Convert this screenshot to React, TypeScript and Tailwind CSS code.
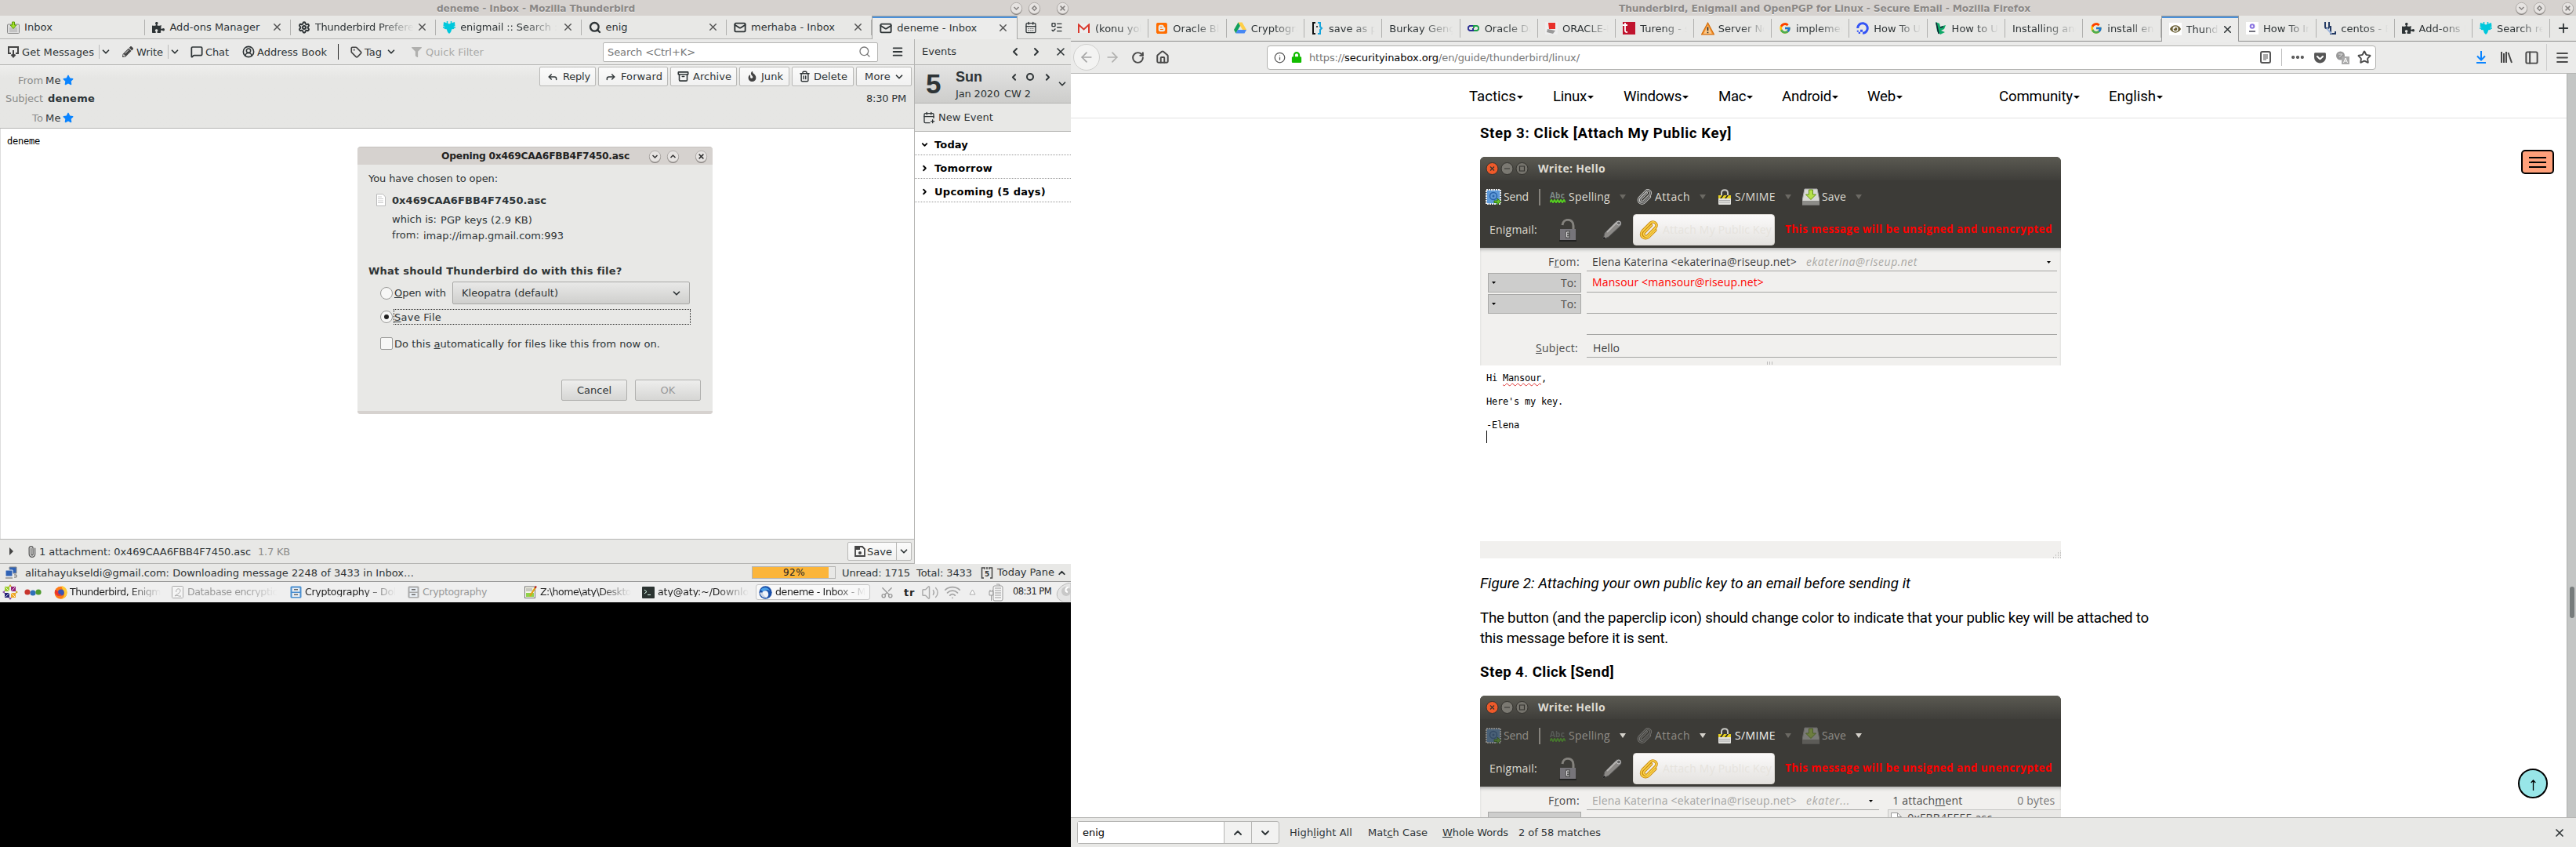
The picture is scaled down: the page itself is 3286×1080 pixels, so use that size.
import React, { useLayoutEffect, useRef } from "react";
import {
  Search, X, ChevronDown, ChevronUp, ChevronLeft, ChevronRight, Menu, CalendarDays, CalendarPlus, ListTodo, Mail,
  MessageSquare, Tag, Trash2, Archive, Reply, CircleUserRound, ArrowLeft, ArrowRight, RotateCw, House, Info, Ellipsis,
  Star, Plus, Paperclip, Settings, Wifi, Scissors, Volume2, PanelLeft,
} from "lucide-react";
import { FaPuzzlePiece, FaStar, FaPencilAlt, FaLock, FaGetPocket, FaDigitalOcean, FaBlogger, FaEye, FaFilter, FaFire } from "react-icons/fa";
import { FcGoogle } from "react-icons/fc";

/** Single line of text whose tracking is adjusted so it spans its box. */
function T({ c = "", children }: { c?: string; children: React.ReactNode }) {
  const box = useRef<HTMLSpanElement>(null);
  const inner = useRef<HTMLSpanElement>(null);
  useLayoutEffect(() => {
    const b = box.current, i = inner.current;
    if (!b || !i) return;
    i.style.letterSpacing = "0px";
    const n = (i.textContent || "").length;
    const d = b.clientWidth - i.getBoundingClientRect().width;
    i.style.letterSpacing = d / n + "px";
  }, []);
  return (
    <span ref={box} className={"block shrink-0 whitespace-pre leading-none " + c}>
      <span ref={inner} className="inline-block">{children}</span>
    </span>
  );
}

const FADE = " [mask-image:linear-gradient(to_right,#000_65%,transparent)]";

function WinBtn({ kind, dim, c = "" }: { kind: "down" | "up" | "max" | "x"; dim?: boolean; c?: string }) {
  return (
    <svg className={"size-[17px] shrink-0 " + c} viewBox="0 0 17 17">
      <circle cx="8.5" cy="9.5" r="7.4" fill="#85817e" />
      <circle cx="8.5" cy="8.5" r="7.2" fill="#e6e3e1" stroke="#a8a4a1" strokeWidth=".8" />
      <g fill="none" stroke={dim ? "#858280" : "#333"} strokeWidth="1.500">
        {kind === "down" && <path d="M5.5 7l3 3 3-3" />}
        {kind === "up" && <path d="M5.5 10l3-3 3 3" />}
        {kind === "max" && <path d="M8.5 5.8L11.2 8.5 8.5 11.2 5.8 8.5z" />}
        {kind === "x" && <path d="M5.6 5.6l5.8 5.8M11.4 5.6l-5.8 5.8" />}
      </g>
    </svg>
  );
}

const Chev = ({ c = "" }) => <ChevronDown className={"size-[14px] shrink-0 " + c} strokeWidth={3} />;

function InboxIcon({ c = "" }) {
  return (
    <svg className={"size-4 shrink-0 " + c} viewBox="0 0 16 16">
      <rect x=".5" y="4" width="15" height="11.5" rx="1" fill="#ddd" stroke="#888" />
      <path d="M3 9h10M3 11h10M3 13h10" stroke="#aaa" />
      <path d="M6.5 1h3v4H12L8 9.5 4 5h2.5z" fill="#a5e02b" stroke="#5a9a08" />
    </svg>
  );
}
const Pgp = ({ c = "" }) => (
  <svg className={"size-4 shrink-0 " + c} viewBox="0 0 16 16">
    <path d="M1 1l3 1 4 1.5L12 2l3-1 .5 5-2 1 .8 3-3 .3L10 14l-2 2-2-2-1.300-3.700-3-.3.8-3-2-1z" fill="#00c8dc" />
    <path d="M5.500 0v3M10.500 0v3M0 8h3M16 8h-3" stroke="#00c8dc" strokeWidth="1.500" />
  </svg>
);

function TbTab({ icon, label, w, fade, close = true, active }: { icon: React.ReactNode; label: string; w: string; fade?: boolean; close?: boolean; active?: boolean }) {
  return (
    <div className={"flex h-[30px] w-[185.4px] shrink-0 items-center " + (active ? "border-x border-t border-[#a5a5a3] bg-[#ececeb] shadow-[inset_0_2px_0_#4a90d9]" : "border-b border-[#b5b5b3]")}>
      <div className="ml-[9px] flex w-[16px] shrink-0">{icon}</div>
      <T c={"ml-[6px] pb-px " + w + (fade ? FADE : "")}>{label}</T>
      <div className="flex-1" />
      {close && <X className="mr-[9px] size-[15px] text-[#555]" strokeWidth={2.300} />}
      <div className={"h-[20px] w-px " + (active ? "" : "bg-[#b0b0ae]")} />
    </div>
  );
}

function ActionBtn({ c, w, icon, children }: { c: string; w: string; icon?: React.ReactNode; children: string }) {
  return (
    <div className={"flex h-[25px] shrink-0 items-center rounded-[2px] border border-[#b9b9b7] bg-linear-to-b from-[#fbfbfb] to-[#f1f1f0] " + c}>
      {icon}
      <T c={w}>{children}</T>
      {children === "More" && <Chev c="ml-[4px]" />}
    </div>
  );
}

function DialogBox() {
  return (
    <div className="absolute left-[456px] top-[187px] flex h-[341px] w-[453px] flex-col overflow-hidden rounded-[4px] bg-[#e8e8e6]">
      <div className="flex h-[23px] shrink-0 items-center rounded-t-[4px] border-t border-[#c5c2bf] bg-[#d6d2cf]">
        <T c="ml-[107px] w-[240px] text-[12.300px] font-bold text-[#222]">Opening 0x469CAA6FBB4F7450.asc</T>
        <WinBtn kind="down" c="ml-[24px]" />
        <WinBtn kind="up" c="ml-[6px]" />
        <WinBtn kind="x" c="ml-[19px]" />
      </div>
      <div className="flex h-[314px] flex-col pl-[14px]">
        <T c="mt-[11px] w-[165px]">You have chosen to open:</T>
        <div className="mt-[13px] flex h-[16px] items-center">
          <svg className="ml-[10px] h-4 w-3 shrink-0" viewBox="0 0 12 16"><path d="M.5.5h8L11.500 4v11.500H.5z" fill="#fff" stroke="#bbb" /><path d="M2 4h5M2 6.500h7M2 9h7M2 11.500h7" stroke="#ccc" /></svg>
          <T c="ml-[8px] w-[197px] font-bold">0x469CAA6FBB4F7450.asc</T>
        </div>
        <div className="mt-[8px] flex h-[16px] items-center pl-[30px]"><T c="w-[57px]">which is:</T><T c="ml-[5px] mt-[2px] w-[117px]">PGP keys (2.9 KB)</T></div>
        <div className="mt-[4px] flex h-[16px] items-center pl-[30px]"><T c="w-[35px]">from:</T><T c="ml-[5px] mt-[2px] w-[179px]">imap://imap.gmail.com:993</T></div>
        <T c="mt-[32px] w-[323px] font-bold">What should Thunderbird do with this file?</T>
        <div className="mt-[7px] flex h-[29px] items-center">
          <span className="ml-[15px] size-4 shrink-0 rounded-full border border-[#9a9a98] bg-[#f7f7f6]" />
          <T c="ml-[2px] w-[66px]"><u>O</u>pen with</T>
          <div className="ml-[8px] flex h-[29px] w-[303px] items-center rounded-[2px] border border-[#a7a7a5] bg-linear-to-b from-[#e9e9e8] to-[#cfcfcd]">
            <T c="ml-[11px] w-[123px]">Kleopatra (default)</T>
            <Chev c="ml-[144px]" />
          </div>
        </div>
        <div className="mt-[6px] flex h-[20px] items-center">
          <span className="ml-[15px] flex size-4 shrink-0 items-center justify-center rounded-full border border-[#9a9a98] bg-[#f7f7f6]"><span className="size-[6px] rounded-full bg-[#222]" /></span>
          <div className="ml-px flex h-[20px] w-[379px] items-center border border-dotted border-[#222]"><T c="w-[60px]"><u>S</u>ave File</T></div>
        </div>
        <div className="mt-[15px] flex h-[18px] items-center">
          <span className="ml-[15px] size-4 shrink-0 rounded-[2px] border border-[#9a9a98] bg-[#f7f7f6]" />
          <T c="ml-[2px] w-[339px]">Do this <u>a</u>utomatically for files like this from now on.</T>
        </div>
        <div className="mt-[37px] flex h-[27px] gap-[10px] pl-[246px]">
          <div className="flex w-[84px] items-center justify-center rounded-[2px] border border-[#b0b0ae] bg-linear-to-b from-[#eeeeed] to-[#d6d6d4]"><T c="w-[44px]">Cancel</T></div>
          <div className="flex w-[84px] items-center justify-center rounded-[2px] border border-[#b0b0ae] bg-linear-to-b from-[#eeeeed] to-[#d6d6d4] text-[#999]"><T c="w-[19px]">OK</T></div>
        </div>
      </div>
      <div className="h-[4px] bg-[#d6d2cf]" />
    </div>
  );
}

const CabinetIcon = ({ c }: { c: string }) => (
  <svg className="h-[16px] w-[15px] shrink-0" viewBox="0 0 15 16"><rect x=".5" y=".5" width="14" height="15" rx="1.500" className={c} /><rect x="2.500" y="2.500" width="10" height="5" fill="#e8eef4" /><rect x="2.500" y="9" width="10" height="5" fill="#e8eef4" /><path d="M5 4h5v1.500H5zM5 10.500h5V12H5z" fill="#666" /></svg>
);

function Thunderbird() {
  return (
    <div className="relative flex h-[768px] flex-col bg-[#e8e8e6] text-[13px] text-[#2e3436]">
      <div className="flex h-[20px] shrink-0 items-center bg-[#d6d2cf]">
        <T c="ml-[557px] w-[253px] pt-[2px] text-[12.300px] font-bold text-[#8b8886] [text-shadow:0_1px_0_#eee]">deneme - Inbox - Mozilla Thunderbird</T>
        <WinBtn kind="down" dim c="ml-[478px]" />
        <WinBtn kind="max" dim c="ml-[6px]" />
        <WinBtn kind="x" dim c="ml-[19px]" />
      </div>
      <div className="flex h-[30px] shrink-0">
        <TbTab icon={<InboxIcon />} label="Inbox" w="w-[36px]" close={false} />
        <TbTab icon={<FaPuzzlePiece className="size-4" />} label="Add-ons Manager" w="w-[115px]" />
        <TbTab icon={<Settings className="size-4" strokeWidth={3} />} label="Thunderbird Prefere" w="w-[126px]" fade />
        <TbTab icon={<Pgp />} label="enigmail :: Search :" w="w-[124px]" fade />
        <TbTab icon={<Search className="size-4" strokeWidth={3.500} />} label="enig" w="w-[28px]" />
        <TbTab icon={<Mail className="size-4" strokeWidth={2.800} />} label="merhaba - Inbox" w="w-[107px]" />
        <TbTab icon={<Mail className="size-4" strokeWidth={2.800} />} label="deneme - Inbox" w="w-[102px]" active />
        <div className="flex flex-1 items-center border-b border-[#b5b5b3]">
          <CalendarDays className="ml-[9px] size-4 shrink-0" /><ListTodo className="ml-[17px] size-4 shrink-0" />
        </div>
      </div>
      <div className="flex h-[669px] shrink-0">
        <div className="flex w-[1166px] flex-col">
          <div className="flex h-[33px] shrink-0 items-center border-b border-[#b5b5b3] bg-[#eaeae9]">
            <svg className="ml-[9px] size-[16px] shrink-0" viewBox="0 0 16 16" fill="none" stroke="#444" strokeWidth="2"><path d="M5 10H2V2h12v8h-3M8 6v8M5.500 11.500L8 14.500l2.500-3" /></svg>
            <T c="ml-[3px] w-[92px]">Get Messages</T>
            <span className="ml-[6px] h-[18px] w-px bg-[#bbb]" />
            <Chev c="ml-px" />
            <FaPencilAlt className="ml-[14px] size-[14px] shrink-0 text-[#444]" />
            <T c="ml-[4px] w-[34px]">Write</T>
            <span className="ml-[6px] h-[18px] w-px bg-[#bbb]" />
            <Chev c="ml-px" />
            <MessageSquare className="ml-[13px] size-4 shrink-0" strokeWidth={2.600} />
            <T c="ml-[3px] w-[30px]">Chat</T>
            <CircleUserRound className="ml-[17px] size-4 shrink-0" strokeWidth={2.400} />
            <T c="ml-[3px] w-[89px]">Address Book</T>
            <span className="ml-[14px] h-[20px] w-px bg-[#222]" />
            <Tag className="ml-[15px] size-[15px] shrink-0 text-[#444]" strokeWidth={2.600} />
            <T c="ml-[3px] w-[22px]">Tag</T>
            <Chev c="ml-[5px]" />
            <FaFilter className="ml-[19px] size-[13px] shrink-0 text-[#b0b0ae]" />
            <T c="ml-[5px] w-[74px] text-[#a9a9a7]">Quick Filter</T>
            <div className="ml-[152px] flex h-[25px] w-[351px] shrink-0 items-center rounded-[2px] border border-[#b5b5b3] bg-white text-[#777]">
              <T c="ml-[5px] w-[112px]">Search &lt;Ctrl+K&gt;</T>
              <Search className="ml-auto mr-[8px] size-4" />
            </div>
            <Menu className="ml-[17px] size-[16px] shrink-0" strokeWidth={2.800} />
          </div>
          <div className="flex h-[81px] shrink-0 justify-between border-b border-[#b5b5b3] bg-linear-to-b from-[#eeeeed] to-[#e6e6e4] to-20%">
            <div className="flex flex-col text-[#2e3436]">
              <div className="mt-[11px] flex h-[16px] items-center"><T c="ml-[23px] w-[32px] text-[#8c8c8a]">From</T><T c="ml-[3px] w-[20px]">Me</T><FaStar className="ml-[2px] size-[14px] text-[#0a84ff]" /></div>
              <div className="mt-[7px] flex h-[16px] items-center"><T c="ml-[7px] w-[48px] text-[#8c8c8a]">Subject</T><T c="ml-[6px] w-[60px] font-bold">deneme</T></div>
              <div className="mt-[9px] flex h-[16px] items-center"><T c="ml-[41px] w-[14px] text-[#8c8c8a]">To</T><T c="ml-[3px] w-[20px]">Me</T><FaStar className="ml-[2px] size-[14px] text-[#0a84ff]" /></div>
            </div>
            <div className="mr-[3px] mt-[2px] flex flex-col items-end">
              <div className="flex gap-[3px]">
                <ActionBtn c="w-[72px]" w="ml-[6px] w-[35px]" icon={<Reply className="ml-[9px] size-[14px] shrink-0" strokeWidth={2.600} />}>Reply</ActionBtn>
                <ActionBtn c="w-[89px]" w="ml-[6px] w-[53px]" icon={<Reply className="ml-[8px] size-[14px] shrink-0 -scale-x-100" strokeWidth={2.600} />}>Forward</ActionBtn>
                <ActionBtn c="w-[85px]" w="ml-[5px] w-[49px]" icon={<Archive className="ml-[8px] size-[15px] shrink-0" strokeWidth={2.500} />}>Archive</ActionBtn>
                <ActionBtn c="w-[64px]" w="ml-[5px] w-[28px]" icon={<FaFire className="ml-[9px] size-[13px] shrink-0 text-[#444]" />}>Junk</ActionBtn>
                <ActionBtn c="w-[79px]" w="ml-[4px] w-[43px]" icon={<Trash2 className="ml-[8px] size-[15px] shrink-0" strokeWidth={2.300} />}>Delete</ActionBtn>
                <ActionBtn c="w-[71px]" w="ml-[10px] w-[33px]">More</ActionBtn>
              </div>
              <T c="mr-[7px] mt-[9px] w-[51px]">8:30 PM</T>
            </div>
          </div>
          <div className="flex-1 border-l border-[#ddd] bg-white"><T c="ml-[8px] mt-[10px] w-[42px] font-['DejaVu_Sans_Mono',monospace] text-[12px] text-black">deneme</T></div>
          <div className="flex h-[32px] shrink-0 items-center border-y border-[#b5b5b3]">
            <svg className="ml-[12px] h-[10px] w-[5px]" viewBox="0 0 5 10"><path d="M0 0l5 5-5 5z" fill="#444" /></svg>
            <Paperclip className="ml-[16px] size-[15px] shrink-0 rotate-[-45deg] text-[#555]" />
            <T c="ml-[2px] w-[270px]">1 attachment: 0x469CAA6FBB4F7450.asc</T>
            <T c="ml-[9px] w-[41px] text-[#8c8c8a]">1.7 KB</T>
            <div className="ml-auto mr-[3px] flex h-[24px] w-[82px] items-center rounded-[2px] border border-[#b9b9b7] bg-linear-to-b from-[#fbfbfb] to-[#f1f1f0]">
              <svg className="ml-[8px] size-[14px] shrink-0" viewBox="0 0 14 14"><path d="M1 1h9l3 3v9H1z" fill="none" stroke="#444" strokeWidth="1.800" /><path d="M1 1h6v4H1z" fill="#444" /><circle cx="7" cy="9" r="2" fill="#444" /></svg>
              <T c="ml-[2px] w-[32px]">Save</T>
              <span className="ml-[5px] h-full w-px bg-[#b9b9b7]" />
              <Chev c="ml-[2px]" />
            </div>
          </div>
        </div>
        <div className="flex w-[200px] flex-col border-l border-[#b5b5b3] bg-white">
          <div className="flex h-[33px] shrink-0 items-center border-b border-[#b5b5b3] bg-[#e8e8e6]">
            <T c="ml-[9px] w-[44px] pb-[2px]">Events</T>
            <ChevronLeft className="ml-[67px] size-4 shrink-0" strokeWidth={3} /><ChevronRight className="ml-[11px] size-4 shrink-0" strokeWidth={3} /><X className="ml-[15px] size-4 shrink-0" strokeWidth={2.300} />
          </div>
          <div className="flex h-[49px] shrink-0 border-b border-[#b5b5b3] bg-linear-to-b from-[#e4e4e3] to-[#cdcdcb]">
            <T c="ml-[14px] mt-[6px] w-[19px] font-['Liberation_Sans',sans-serif] text-[35px] font-bold">5</T>
            <div className="ml-[19px] flex w-[127px] flex-col">
              <div className="mt-[6px] flex h-[18px] items-center">
                <T c="w-[34px] font-['Liberation_Sans',sans-serif] text-[18px] font-bold">Sun</T>
                <ChevronLeft className="ml-[34px] size-[13px] shrink-0" strokeWidth={3.500} />
                <span className="ml-[9px] size-[10px] rounded-full border-2 border-[#2e3436]" />
                <ChevronRight className="ml-[11px] size-[13px] shrink-0" strokeWidth={3.500} />
              </div>
              <div className="mt-[6px] flex"><T c="w-[56px]">Jan 2020</T><T c="ml-[6px] w-[34px]">CW 2</T></div>
            </div>
            <Chev c="ml-[2px] mt-[17px]" />
          </div>
          <div className="flex h-[36px] shrink-0 items-center border-b border-[#b5b5b3] bg-[#e8e8e6]"><CalendarPlus className="ml-[10px] size-4" /><T c="ml-[4px] w-[70px]">New Event</T></div>
          <div className="flex h-[30px] shrink-0 items-center border-b border-dotted border-[#999] pt-[3px] text-black"><ChevronDown className="ml-[7px] size-[11px]" strokeWidth={4} /><T c="ml-[7px] w-[43px] font-bold">Today</T></div>
          <div className="flex h-[30px] shrink-0 items-center border-b border-dotted border-[#999] pt-[3px] text-black"><ChevronRight className="ml-[7px] size-[11px]" strokeWidth={4} /><T c="ml-[7px] w-[74px] font-bold">Tomorrow</T></div>
          <div className="flex h-[30px] shrink-0 items-center border-b border-dotted border-[#999] pt-[3px] text-black"><ChevronRight className="ml-[7px] size-[11px]" strokeWidth={4} /><T c="ml-[7px] w-[142px] font-bold">Upcoming (5 days)</T></div>
        </div>
      </div>
      <div className="flex h-[23px] shrink-0 items-center border-b border-[#999]">
        <svg className="ml-[6px] size-[16px] shrink-0" viewBox="0 0 16 16"><path d="M6 1h9v8H6z" fill="#2f62b5" stroke="#888" /><path d="M1 5h9v8H1z" fill="#2f62b5" stroke="#eee" /><path d="M1 15h9M12 11h3v3h-3" stroke="#666" fill="none" /></svg>
        <T c="ml-[10px] w-[496px]">alitahayukseldi@gmail.com: Downloading message 2248 of 3433 in Inbox…</T>
        <div className="ml-[431px] flex h-[16px] w-[107px] items-center border border-[#b5b5b3] bg-linear-to-r from-[#fbb53a] from-92% to-[#e8e8e6] to-92%"><T c="ml-[39px] w-[28px] text-[12px] text-[#222]">92%</T></div>
        <T c="ml-[8px] w-[87px]">Unread: 1715</T>
        <T c="ml-[8px] w-[71px]">Total: 3433</T>
        <svg className="ml-[11px] size-[16px] shrink-0" viewBox="0 0 16 16"><path d="M4 2H1.500v13H4M12 2h2.500v13H12M5 1v3M8 1v3M11 1v3" fill="none" stroke="#444" strokeWidth="1.500" /><text x="5" y="13" fontSize="9" fontWeight="700" fill="#333">5</text></svg>
        <T c="ml-[5px] w-[73px] pb-px">Today Pane</T>
        <ChevronUp className="ml-[3px] size-[13px] shrink-0" strokeWidth={3.500} />
      </div>
      <div className="flex h-[26px] shrink-0 items-center bg-[#efefef] text-[12.600px] text-[#222]">
        <svg className="ml-[3px] size-[20px] shrink-0" viewBox="0 0 20 20"><path d="M3 3h6v6H3z" fill="#9ccd2a" /><path d="M11 3h6v6h-6z" fill="#932279" /><path d="M3 11h6v6H3z" fill="#262577" /><path d="M11 11h6v6h-6z" fill="#efa724" /><path d="M10 0l2 3h-4zM20 10l-3-2v4z" fill="#c9a02a" /><path d="M10 20l2-3H8zM0 10l3-2v4z" fill="#8a4fa0" /><path d="M4 4l12 12M16 4L4 16" stroke="#fff" strokeWidth=".8" /></svg>
        <svg className="ml-[8px] h-[10px] w-[22px] shrink-0" viewBox="0 0 22 10"><circle cx="4" cy="5" r="3.600" fill="#c8352e" /><circle cx="11" cy="6" r="3.600" fill="#2f6fb8" /><circle cx="18" cy="5" r="3.600" fill="#4f9a30" /></svg>
        <svg className="ml-[16px] size-[17px] shrink-0" viewBox="0 0 16 16"><circle cx="8" cy="8.300" r="7.500" fill="#ff7b16" /><path d="M9 0c4 1 7 4 6.500 8.500S11 16 8 15.800C12 14 13 11 12 8S9 3 9 0z" fill="#ffc933" /><circle cx="8.300" cy="8" r="3.700" fill="#3a53b5" /><path d="M1 5c2 0 4 1 4 3s2 3 4 2c-1 3-6 3-8-1z" fill="#e8352e" /></svg>
        <T c={"ml-[3px] w-[116px]" + FADE}>Thunderbird, Enigm</T>
        <svg className="ml-[14px] size-4 shrink-0" viewBox="0 0 16 16" fill="#f5f5f5" stroke="#aaa"><rect x=".5" y=".5" width="14" height="15" rx="1" /><path d="M6 8c-2-4 5-6 5-2s-6 5-7 7c3-2 5 1 8 0" fill="none" /></svg>
        <T c={"ml-[4px] w-[115px] text-[#999]" + FADE}>Database encryptic</T>
        <div className="ml-[16px] flex"><CabinetIcon c="fill-[#4b8fd0]" /></div>
        <T c={"ml-[4px] w-[116px]" + FADE}>Cryptography – Dol</T>
        <div className="ml-[15px] flex"><CabinetIcon c="fill-[#aaa]" /></div>
        <T c="ml-[4px] w-[82px] text-[#999]">Cryptography</T>
        <svg className="ml-[48px] size-[16px] shrink-0" viewBox="0 0 16 16"><rect x=".5" y="1" width="13" height="14.500" fill="#f6f6e8" stroke="#777" /><path d="M2 9h10v5H2z" fill="#8fd14a" /><path d="M2 4h8M2 6h8" stroke="#999" /><path d="M7 13l7-11" stroke="#e2a112" strokeWidth="2.200" /><path d="M13.500 3L15 .5" stroke="#b22" strokeWidth="2.200" /></svg>
        <T c={"ml-[4px] w-[116px]" + FADE}>Z:\home\aty\Deskto</T>
        <svg className="ml-[14px] h-[15px] w-[16px] shrink-0" viewBox="0 0 16 15"><rect width="16" height="15" rx="1" fill="#2b3331" /><path d="M3 4l3 2.500L3 9M7 10.500h4" stroke="#dfe" fill="none" /></svg>
        <T c={"ml-[4px] w-[116px]" + FADE}>aty@aty:~/Downlo</T>
        <div className="ml-[9px] flex h-[20px] w-[146px] shrink-0 items-center rounded-[3px] border border-[#c5c5c5] bg-[#f8f8f8]">
          <svg className="ml-[3px] size-[17px] shrink-0" viewBox="0 0 16 16"><circle cx="8" cy="8" r="7.700" fill="#1a4fa8" /><path d="M4.500 7c1-1.500 5-1.500 6 0s2 5-1 7c-4 .5-6-3-5-7z" fill="#f0f3f8" /><path d="M2 5c3-4 9-4 11.500 1.500C10 4 7 5 5.500 7 4 6 3 5.500 2 5z" fill="#4aa1ea" /><path d="M1 8c1 5 5 7 9 6-3-1-5-3-5.500-6z" fill="#c9d3e4" /></svg>
          <T c={"ml-[4px] w-[115px]" + FADE}>deneme - Inbox - M</T>
        </div>
        <Scissors className="ml-[13px] size-[17px] shrink-0 -rotate-90 text-[#999]" />
        <T c="ml-[13px] w-[14px] text-[13px] font-bold">tr</T>
        <Volume2 className="ml-[8px] size-[23px] shrink-0 text-[#aaa]" strokeWidth={1.500} />
        <Wifi className="ml-[6px] size-[22px] shrink-0 text-[#a5a5a5]" />
        <svg className="ml-[10px] h-[8px] w-[9px] shrink-0" viewBox="0 0 9 8"><path d="M4.500 1L8 7H1z" fill="#fff" stroke="#aaa" /></svg>
        <svg className="ml-[15px] h-[23px] w-[20px] shrink-0" viewBox="0 0 20 23" fill="none" stroke="#999"><rect x="7" y="3" width="12" height="19" rx="2" fill="#f5f5f5" /><path d="M11 1h4v2M9 6h8M9 9h8M9 12h8M9 15h8M9 18h8M2 10v5h5v-5zM3 8v2M6 8v2M4.500 15v7" /></svg>
        <T c="ml-[12px] w-[49px] pb-px text-[11.500px]">08:31 PM</T>
        <svg className="ml-[5px] h-[24px] w-[20px] shrink-0" viewBox="0 0 20 24"><path d="M20 0C2 2-4 20 10 24h10z" fill="#e4e4e4" stroke="#bbb" /><circle cx="14" cy="11" r="6" fill="#c8c8c8" /><path d="M17 6c-4 0-5 5-1 6" stroke="#fff" strokeWidth="2" fill="none" /></svg>
      </div>
      <DialogBox />
    </div>
  );
}

function FxTab({ icon, label, active }: { icon?: React.ReactNode; label: string; active?: boolean }) {
  return (
    <div className={"flex h-[33px] w-[99.330px] shrink-0 items-center " + (active ? "border-x border-t border-[#999] bg-[#ececeb] shadow-[inset_0_2px_0_#4a90d9]" : "border-b border-[#8f8f8d]")}>
      {icon && <div className="ml-[9px] flex w-[17px] shrink-0">{icon}</div>}
      <div className={(icon ? "ml-[5px] " : "ml-[9px] ") + (active ? "w-[41px]" : "flex-1") + " overflow-hidden whitespace-nowrap pt-px leading-[16px] [mask-image:linear-gradient(to_right,#000_50%,transparent)]"}>{label}</div>
      {active ? <X className="ml-[4px] size-[15px]" strokeWidth={2.500} /> : <><div className="w-[8px]" /><div className="h-[24px] w-px bg-[#b0b0ae]" /></>}
    </div>
  );
}

const Caret = ({ c = "", s = "h-[4px] w-[8px]" }) => <svg className={"shrink-0 " + s + " " + c} viewBox="0 0 8 4" preserveAspectRatio="none"><path d="M0 0h8L4 4z" fill="currentColor" /></svg>;
const BAR = "h-[6px] w-[8px]";
const TINY = "h-[3px] w-[5px]";

function Clip({ c = "", color, edge }: { c?: string; color: string; edge: string }) {
  return (
    <svg className={"shrink-0 " + c} viewBox="0 0 24 24" fill="none" strokeLinecap="round">
      <path d="M15 6L6 15c-2 3 2 6 4 4L20 9c4-5-3-9-6-6L4 13c-5 6 3 12 8 7l8-8" stroke={edge} strokeWidth="3.400" />
      <path d="M15 6L6 15c-2 3 2 6 4 4L20 9c4-5-3-9-6-6L4 13c-5 6 3 12 8 7l8-8" stroke={color} strokeWidth="1.600" />
    </svg>
  );
}

function Compose({ sending }: { sending?: boolean }) {
  const dim = sending ? "opacity-40" : "";
  const txt = sending ? "text-[#8f8c86]" : "text-[#dfdbd2]";
  const car = sending ? "text-[#d5d2cb]" : "text-[#6b6963]";
  return (
    <div className="flex h-[512px] w-[741px] shrink-0 flex-col bg-white font-['Open_Sans','Noto_Sans',sans-serif] text-[14px]">
      <div className="flex h-[116px] shrink-0 flex-col rounded-t-[6px] bg-[#3c3b37] text-[#dfdbd2]">
        <div className="flex h-[30px] items-center rounded-t-[6px] bg-linear-to-b from-[#5b5a52] to-[#3f3e3a]">
          <svg className="ml-[7px] h-[18px] w-[56px] shrink-0" viewBox="0 0 56 18"><g stroke="#33322e"><circle cx="8.500" cy="9" r="7.500" fill="#ee5a2a" /><circle cx="27.500" cy="9" r="7.500" fill="#7b7972" /><circle cx="46.500" cy="9" r="7.500" fill="#75736c" /></g><path d="M6 6.500l5 5M11 6.500l-5 5M24 9h7M43.500 6h6v6h-6z" stroke="#33322e" fill="none" strokeWidth="1.200" /></svg>
          <T c="ml-[11px] w-[86px] font-bold">Write: Hello</T>
        </div>
        <div className="flex h-[42px] items-center">
          <svg className={"ml-[7px] size-[20px] shrink-0 " + dim} viewBox="0 0 20 20"><rect x="1" y="1" width="18" height="18" fill="#5f9ad8" stroke="#eee" strokeWidth="2" strokeDasharray="2 1" /><circle cx="10" cy="9" r="4.500" fill="none" stroke="#2a62a8" strokeWidth="1.500" /><circle cx="10" cy="9" r="1.500" fill="#2a62a8" /><path d="M11 15h4v-3l4.500 4-4.500 4v-2.500h-4z" fill="#67c32a" stroke="#2c7a0a" /></svg>
          <T c={"ml-[3px] w-[32px] " + txt}>Send</T>
          <span className="ml-[13px] h-[21px] w-[2px] bg-[#85827c]" />
          <div className={"ml-[11px] flex w-[21px] shrink-0 flex-col items-center " + dim}>
            <T c="w-[19px] text-[10px] font-bold text-[#7f8a86]">Abc</T>
            <svg className="h-[5px] w-[20px]" viewBox="0 0 20 5"><path d="M0 4l2-3 2 3 2-3 2 3 2-3 2 3 2-3 2 3 2-3 2 3" fill="none" stroke="#55d020" strokeWidth="2" /></svg>
          </div>
          <T c={"ml-[4px] w-[53px] " + txt}>Spelling</T>
          <Caret s={BAR} c={"ml-[12px] " + car} />
          <Clip c={"ml-[14px] size-[20px] " + dim} color="#555" edge="#d8d8d4" />
          <T c={"ml-[3px] w-[45px] " + txt}>Attach</T>
          <Caret s={BAR} c={"ml-[12px] " + car} />
          <svg className="ml-[16px] h-[20px] w-[16px] shrink-0" viewBox="0 0 16 20"><path d="M4 9V5c0-5 8-5 8 0v4" fill="none" stroke="#c9c9c4" strokeWidth="2" /><rect y="8" width="16" height="12" rx="1" fill="#e2e2de" /><path d="M0 8h16v4H0z" fill="#e5cf20" /><path d="M2 12l3-4h2l-3 4zM8 12l3-4h2l-3 4z" fill="#222" /><path d="M1 14.500h14M1 17h14" stroke="#aaa" /></svg>
          <T c={"ml-[5px] w-[52px] " + (sending ? "text-[#f5f3ee]" : txt)}>S/MIME</T>
          <Caret s={BAR} c="ml-[12px] text-[#6b6963]" />
          <svg className={"ml-[14px] size-[22px] shrink-0 " + dim} viewBox="0 0 22 22"><path d="M3 1h16l3 15v5H0v-5z" fill="#d8d8d4" stroke="#aaa" /><path d="M0 16h22v5H0z" fill="#8c8c88" /><path d="M8.500 2h5v6h4L11 14.500 4.500 8h4z" fill="#b5e04a" stroke="#64921a" /></svg>
          <T c={"ml-[3px] w-[31px] " + txt}>Save</T>
          <Caret s={BAR} c={"ml-[12px] " + car} />
        </div>
        <div className="flex h-[42px] items-center">
          <T c="ml-[12px] w-[61px]">Enigmail:</T>
          <svg className="ml-[28px] h-[29px] w-[22px] shrink-0" viewBox="0 0 22 29"><path d="M4 8c1-9 14-9 14 1v5" fill="none" stroke="#85837e" strokeWidth="3" /><rect x="1" y="13" width="20" height="14" fill="#77757a" /><path d="M8 15h6v10H8z" fill="#555" /><path d="M12.500 17h-3v6h3M9.500 20h2.500" fill="none" stroke="#ddd" /><path d="M0 28h22" stroke="#222" strokeWidth="2" /></svg>
          <svg className="ml-[33px] h-[26px] w-[26px] shrink-0" viewBox="0 0 26 26"><path d="M1 25l2-8L18 2c2-2 8 2 5 6L8 22z" fill="#8b8986" stroke="#555" /><path d="M6 16L18 4" stroke="#b5b3b0" strokeWidth="2" /><path d="M1 25l1-3 2 2z" fill="#111" /><circle cx="21" cy="4.500" r="2.500" fill="#666" stroke="#ccc" /></svg>
          <div className="ml-[13px] flex h-[40px] w-[181px] shrink-0 items-center rounded-[4px] border border-[#dbd8d3] bg-linear-to-b from-[#fbfafa] to-[#e4e2df]">
            <Clip c="ml-[6px] h-[25px] w-[27px]" color="#fbd34a" edge="#c98a12" />
            <T c="ml-[4px] w-[139px] text-[#e6e3dd]">Attach My Public Key</T>
          </div>
          <T c="ml-[13px] w-[341px] text-[13.500px] font-bold text-[#f00]">This message will be unsigned and unencrypted</T>
        </div>
      </div>
      <div className="flex h-[150px] shrink-0 flex-col bg-[#f1f0ee] text-[#4c4c4c] shadow-[inset_0_4px_4px_-2px_#aaa]">
        <div className="flex h-[30px]">
          <T c="ml-[87px] mt-[11px] w-[40px]">F<u>r</u>om:</T>
          <div className={"ml-[9px] flex items-center border-b border-[#a5a5a3] pt-[7px] " + (sending ? "w-[374px]" : "w-[600px]")}>
            <T c={"ml-[7px] w-[261px] " + (sending ? "text-[#a5a5a3]" : "text-[#3c3c3c]")}>Elena Katerina &lt;ekaterina@riseup.net&gt;</T>
            {sending ? <T c="ml-[12px] w-[56px] italic text-[#aaa9a5]">ekater...</T> : <T c="ml-[12px] w-[142px] italic text-[#aaa9a5]">ekaterina@riseup.net</T>}
            <Caret s={TINY} c="ml-auto mr-[8px] text-black" />
          </div>
          {sending && <div className="ml-[11px] flex w-[221px] items-center border-b border-[#c5c5c3] pl-[6px] pt-[7px]"><T c="w-[89px]">1 attach<u>m</u>ent</T><T c="ml-[70px] w-[48px] text-[#777]">0 bytes</T></div>}
        </div>
        {[1, 2].map((n) => (
          <div key={n} className="flex h-[27px]">
            <div className="ml-[10px] mt-[2px] flex h-[25px] w-[119px] items-center border border-[#a9a9a7] bg-[#cdcdcc]">
              <Caret s={TINY} c="ml-[4px] text-black" />
              <T c="ml-[83px] w-[20px]">To:</T>
            </div>
            <div className={"ml-[7px] flex items-center border-b border-[#a5a5a3] " + (sending ? "w-[374px]" : "w-[600px]")}>
              {n === 1 && !sending && <T c="ml-[7px] mt-[2px] w-[219px] text-[#f00]">Mansour &lt;mansour@riseup.net&gt;</T>}
            </div>
            {sending && n === 1 && <div className="ml-[11px] flex w-[221px] border-l border-[#c5c5c3] bg-[#e9e8e6] pt-[3px]"><svg className="ml-[3px] h-[16px] w-[14px]" viewBox="0 0 14 16"><path d="M.5.5h8l5 5v10H.5z" fill="#fff" stroke="#999" /><path d="M8.500.5v5h5" fill="none" stroke="#999" /></svg><T c="ml-[7px] w-[108px]">0xFBB4EEEE.asc</T></div>}
          </div>
        ))}
        <div className="ml-[136px] h-[27px] w-[600px] border-b border-[#a5a5a3]" />
        <div className="flex h-[29px]">
          <T c="ml-[71px] mt-[10px] w-[54px]"><u>S</u>ubject:</T>
          <div className="ml-[11px] w-[600px] border-b border-[#a5a5a3]"><T c="ml-[8px] mt-[10px] w-[34px] text-[#3c3c3c]">Hello</T></div>
        </div>
        <div className="ml-[366px] mt-[5px] flex h-[4px] gap-[2px]"><span className="w-px bg-[#bbb]" /><span className="w-px bg-[#bbb]" /><span className="w-px bg-[#bbb]" /></div>
      </div>
      <div className="flex h-[224px] shrink-0 flex-col pl-[8px] font-['DejaVu_Sans_Mono',monospace] text-[12px] text-black">
        <T c="mt-[10px] w-[77px]">Hi <span className="underline decoration-[#d33] decoration-wavy decoration-1 underline-offset-2">Mansour</span>,</T>
        <T c="mt-[18px] w-[98px]">Here's my key.</T>
        <T c="mt-[18px] w-[42px]">-Elena</T>
        <span className="mt-px h-[16px] w-px bg-black" />
      </div>
      <div className="flex h-[22px] shrink-0 items-end justify-end bg-[#f1f0ee]"><svg className="size-[10px]" viewBox="0 0 10 10"><path d="M0 9h10M3 6h7M6 3h4M9 0h1" stroke="#999" strokeDasharray="1 2" /></svg></div>
    </div>
  );
}

function NavItem({ c, w, children }: { c: string; w: string; children: string }) {
  return <div className={"flex items-center " + c}><T c={w}>{children}</T><Caret c="ml-px mt-[2px]" /></div>;
}

function Firefox() {
  const g = <FcGoogle className="size-[16px]" />;
  return (
    <div className="flex h-[1080px] w-[1920px] flex-col bg-[#e8e8e6] text-[13px] text-[#2e3436]">
      <div className="flex h-[20px] shrink-0 items-center bg-[#d6d2cf]">
        <T c="ml-[699px] w-[525px] pt-[2px] text-[12.300px] font-bold text-[#8b8886] [text-shadow:0_1px_0_#eee]">Thunderbird, Enigmail and OpenPGP for Linux - Secure Email - Mozilla Firefox</T>
        <WinBtn kind="down" dim c="ml-[618px]" />
        <WinBtn kind="max" dim c="ml-[6px]" />
        <WinBtn kind="x" dim c="ml-[19px]" />
      </div>
      <div className="flex h-[33px] shrink-0">
        <FxTab label="(konu yok)" icon={<svg className="h-[12px] w-[15px]" viewBox="0 0 15 12"><path d="M0 0h15v12H0z" fill="#eee" /><path d="M1 12V1.500l6.500 6L14 1.500V12" fill="none" stroke="#d93a2e" strokeWidth="2" /></svg>} />
        <FxTab label="Oracle Blog" icon={<FaBlogger className="size-[16px] text-[#ff6d00]" />} />
        <FxTab label="Cryptography" icon={<svg className="size-[16px]" viewBox="0 0 16 15"><path d="M5.500 0h5l5.500 9.500h-5z" fill="#ffcf48" /><path d="M5.500 0L0 9.500 2.500 14 8 4.500z" fill="#12a05c" /><path d="M2.500 14L5 9.500h11L13.500 14z" fill="#4788f4" /></svg>} />
        <FxTab label="save as pdf" icon={<svg className="size-[16px]" viewBox="0 0 16 16" fill="none" strokeWidth="2"><path d="M5 1H2v14h3" stroke="#111" /><path d="M8 1h3v5l2 2-2 2v5H8" stroke="#16a4dc" /><circle cx="7" cy="6" r="1" fill="#111" stroke="none" /></svg>} />
        <FxTab label="Burkay Genç" />
        <FxTab label="Oracle Data" icon={<svg className="h-[10px] w-[15px]" viewBox="0 0 15 10" fill="none" strokeWidth="2"><path d="M7 2H3C0 3 0 7 3 8h4V5" stroke="#2b2f93" /><path d="M8 8h4c3-1 3-5 0-6H8v3" stroke="#1ea04a" /></svg>} />
        <FxTab label="ORACLE-BASE" icon={<svg className="size-[16px]" viewBox="0 0 16 16"><path d="M0 0h16v16H0z" fill="#eee" /><path d="M4 1h9v8H5z" fill="#e8302a" /><path d="M3 9l10 2-3 4-8-2z" fill="#999" /></svg>} />
        <FxTab label="Tureng - se" icon={<svg className="size-[16px]" viewBox="0 0 16 16"><path d="M0 0h16v16H0z" fill="#c0142e" /><path d="M0 4h6M3 1v10c0 2 1 2 3 2" stroke="#fff" strokeWidth="1.800" fill="none" /></svg>} />
        <FxTab label="Server Not" icon={<svg className="size-[17px]" viewBox="0 0 16 16"><path d="M8 1l7.500 14H.5z" fill="#f7912d" stroke="#cf6d0c" /><path d="M8 4l5 10H3z" fill="#fbc98a" /><path d="M8 6v4.500M8 12v1.500" stroke="#222" strokeWidth="1.500" /></svg>} />
        <FxTab label="implementi" icon={g} />
        <FxTab label="How To Use" icon={<FaDigitalOcean className="size-[16px] text-[#3454f5]" />} />
        <FxTab label="How to Use" icon={<svg className="size-[16px]" viewBox="0 0 16 16"><path d="M1 0l5 2 1 4 7-2-2 5-4 2 5 2-6 3-4-4z" fill="#0fa968" /><path d="M2 1l3 14M7 7l4-1" stroke="#123" strokeWidth="1.500" /></svg>} />
        <FxTab label="Installing and" />
        <FxTab label="install eni" icon={g} />
        <FxTab label="Thunder" active icon={<div className="flex size-[16px] items-center justify-center bg-white"><FaEye className="size-[14px] text-[#6a5f35]" /></div>} />
        <FxTab label="How To Ins" icon={<svg className="size-[16px]" viewBox="0 0 16 16"><path d="M0 0h16v16H0z" fill="#fff" /><circle cx="8" cy="5.500" r="3.300" fill="#8a74e0" /><circle cx="8" cy="5.500" r="1.200" fill="#fff" /><path d="M4 12h8" stroke="#445" strokeWidth="1.500" /></svg>} />
        <FxTab label="centos - Bi" icon={<svg className="size-[16px]" viewBox="0 0 16 16" fill="none" stroke="#243a63" strokeWidth="2"><path d="M2 0v6c0 3 5 3 5 0V0M9 5v10h6v-3" /><path d="M4 8l6 7" stroke="#9fb7dd" /></svg>} />
        <FxTab label="Add-ons Ma" icon={<FaPuzzlePiece className="size-[16px]" />} />
        <FxTab label="Search resu" icon={<Pgp />} />
        <div className="flex flex-1 items-center justify-center border-b border-[#8f8f8d]"><Plus className="size-[18px]" strokeWidth={2.400} /></div>
      </div>
      <div className="flex h-[41px] shrink-0 items-center border-b border-[#b5b5b3] bg-[#ebebea] text-[#4a4a4a]">
        <div className="ml-[3px] flex size-[34px] shrink-0 items-center justify-center rounded-full border border-[#cfcfcd] bg-[#f3f3f2] text-[#a5a5a5]"><ArrowLeft className="size-[20px]" /></div>
        <ArrowRight className="ml-[6px] size-[20px] text-[#b0b0ae]" />
        <RotateCw className="ml-[14px] size-[17px]" strokeWidth={2.800} />
        <House className="ml-[14px] size-[18px]" strokeWidth={2.600} />
        <div className="ml-[124px] flex h-[31px] w-[1415px] shrink-0 items-center rounded-[4px] border border-[#b0b0ae] bg-white">
          <Info className="ml-[8px] size-[15px] text-[#555]" />
          <FaLock className="ml-[7px] size-[14px] text-[#12bc00]" />
          <T c="ml-[9px] w-[45px] text-[#777]">https://</T>
          <T c="w-[120px] text-black">securityinabox.org</T>
          <T c="w-[180px] text-[#777]">/en/guide/thunderbird/linux/</T>
          <svg className="ml-auto h-[16px] w-[14px] text-[#555]" viewBox="0 0 14 16" fill="none" stroke="currentColor"><rect x="1" y="1" width="12" height="14" rx="2" strokeWidth="2" /><path d="M4 5h6M4 7h6M4 9h6M4 11h4" /></svg>
          <span className="ml-[13px] h-[22px] w-px bg-[#bbb]" />
          <Ellipsis className="ml-[10px] size-[20px]" strokeWidth={3} />
          <FaGetPocket className="ml-[10px] size-[17px] text-[#555]" />
          <svg className="ml-[12px] size-[17px]" viewBox="0 0 17 17"><circle cx="5.500" cy="6" r="5.500" fill="#999" /><path d="M7 7h10v10H7z" fill="#aaa" /><path d="M9.500 15l2.500-6 2.500 6M10.500 13h3" stroke="#fff" fill="none" /><path d="M3 4h5L4 8" stroke="#ddd" fill="none" /></svg>
          <Star className="ml-[10px] mr-[5px] size-[18px]" strokeWidth={2.500} />
        </div>
        <svg className="ml-[126px] size-[16px] shrink-0" viewBox="0 0 16 16" fill="none" stroke="#0a84ff" strokeWidth="2"><path d="M8 0v11M3 6.500l5 5 5-5M2 15h12" /></svg>
        <svg className="ml-[16px] size-[16px] shrink-0" viewBox="0 0 16 16" fill="none" stroke="#4a4a4a" strokeWidth="2"><path d="M2 1v14M5 3v12M8 1v14M10.500 2l4.500 13" /></svg>
        <PanelLeft className="ml-[15px] size-[19px]" strokeWidth={2.500} />
        <span className="ml-[9px] h-[34px] w-px bg-[#ccc]" />
        <Menu className="ml-[10px] size-[19px]" strokeWidth={2.600} />
      </div>
      <div className="flex h-[948px] shrink-0">
        <div className="relative flex h-[948px] w-[1908px] flex-col overflow-hidden bg-white font-['Roboto',sans-serif] text-[18.660px] text-black">
          <div className="flex h-[57px] shrink-0 items-center border-b border-[#e2e2e2] pt-[2px]">
            <NavItem c="ml-[508px]" w="w-[60px]">Tactics</NavItem>
            <NavItem c="ml-[38px]" w="w-[43px]">Linux</NavItem>
            <NavItem c="ml-[38px]" w="w-[74px]">Windows</NavItem>
            <NavItem c="ml-[38px]" w="w-[35px]">Mac</NavItem>
            <NavItem c="ml-[37px]" w="w-[63px]">Android</NavItem>
            <NavItem c="ml-[37px]" w="w-[36px]">Web</NavItem>
            <NavItem c="ml-[123px]" w="w-[94px]">Community</NavItem>
            <NavItem c="ml-[37px]" w="w-[60px]">English</NavItem>
          </div>
          <div className="ml-[522px] flex flex-col">
            <T c="mt-[10px] h-[18px] w-[321px] font-bold">Step 3: Click [Attach My Public Key]</T>
            <div className="mt-[21px] flex"><Compose /></div>
            <T c="mt-[23px] h-[20px] w-[549px] italic">Figure 2: Attaching your own public key to an email before sending it</T>
            <T c="mt-[24px] h-[18px] w-[853px]">The button (and the paperclip icon) should change color to indicate that your public key will be attached to</T>
            <T c="mt-[8px] h-[18px] w-[240px]">this message before it is sent.</T>
            <T c="mt-[25px] h-[18px] w-[171px] font-bold">Step 4<span className="font-normal">.</span> Click [Send]</T>
            <div className="mt-[21px] flex"><Compose sending /></div>
          </div>
          <div className="absolute right-[16px] top-[97px] flex h-[31px] w-[42px] flex-col items-center justify-center gap-[4px] rounded-[5px] border-2 border-black bg-[#ffa07a]">
            <span className="h-[2px] w-[22px] bg-black" /><span className="h-[2px] w-[22px] bg-black" /><span className="h-[2px] w-[22px] bg-black" />
          </div>
          <div className="absolute right-[24px] top-[886px] flex size-[38px] items-center justify-center rounded-full border-2 border-black bg-[#98e6e8]">
            <svg className="mt-[3px] h-[14px] w-[7px]" viewBox="0 0 7 14" fill="none" stroke="#000" strokeWidth="1.300"><path d="M3.500 14V1M.7 4l2.800-3 2.800 3" /></svg>
          </div>
        </div>
        <div className="flex w-[12px] justify-center border-l border-[#aeb0af] bg-[#c4c6c5]"><span className="mt-[654px] h-[40px] w-[6px] rounded-full bg-[#777c7c]" /></div>
      </div>
      <div className="flex h-[38px] shrink-0 items-center border-t border-[#b5b5b3]">
        <div className="ml-[8px] flex h-[29px] w-[258px] shrink-0 items-center rounded-[3px] border border-[#b5b5b3] bg-[#f2f2f1]">
          <div className="flex h-full w-[187px] items-center border-r border-[#b5b5b3] bg-white"><T c="ml-[6px] w-[28px] text-black">enig</T></div>
          <div className="flex h-full w-[35px] items-center justify-center border-r border-[#b5b5b3]"><ChevronUp className="size-[16px]" strokeWidth={2.800} /></div>
          <div className="flex flex-1 items-center justify-center"><ChevronDown className="size-[16px]" strokeWidth={2.800} /></div>
        </div>
        <T c="ml-[13px] w-[80px]">High<u>l</u>ight All</T>
        <T c="ml-[20px] w-[76px]">Mat<u>c</u>h Case</T>
        <T c="ml-[19px] w-[84px]"><u>W</u>hole Words</T>
        <T c="ml-[13px] w-[105px]">2 of 58 matches</T>
        <X className="ml-auto mr-[13px] size-[16px]" strokeWidth={2.500} />
      </div>
    </div>
  );
}

export default function App() {
  return (
    <div className="flex h-[1080px] w-[3286px] overflow-hidden bg-black font-['DejaVu_Sans',sans-serif]">
      <div className="w-[1366px] shrink-0"><Thunderbird /></div>
      <Firefox />
    </div>
  );
}
